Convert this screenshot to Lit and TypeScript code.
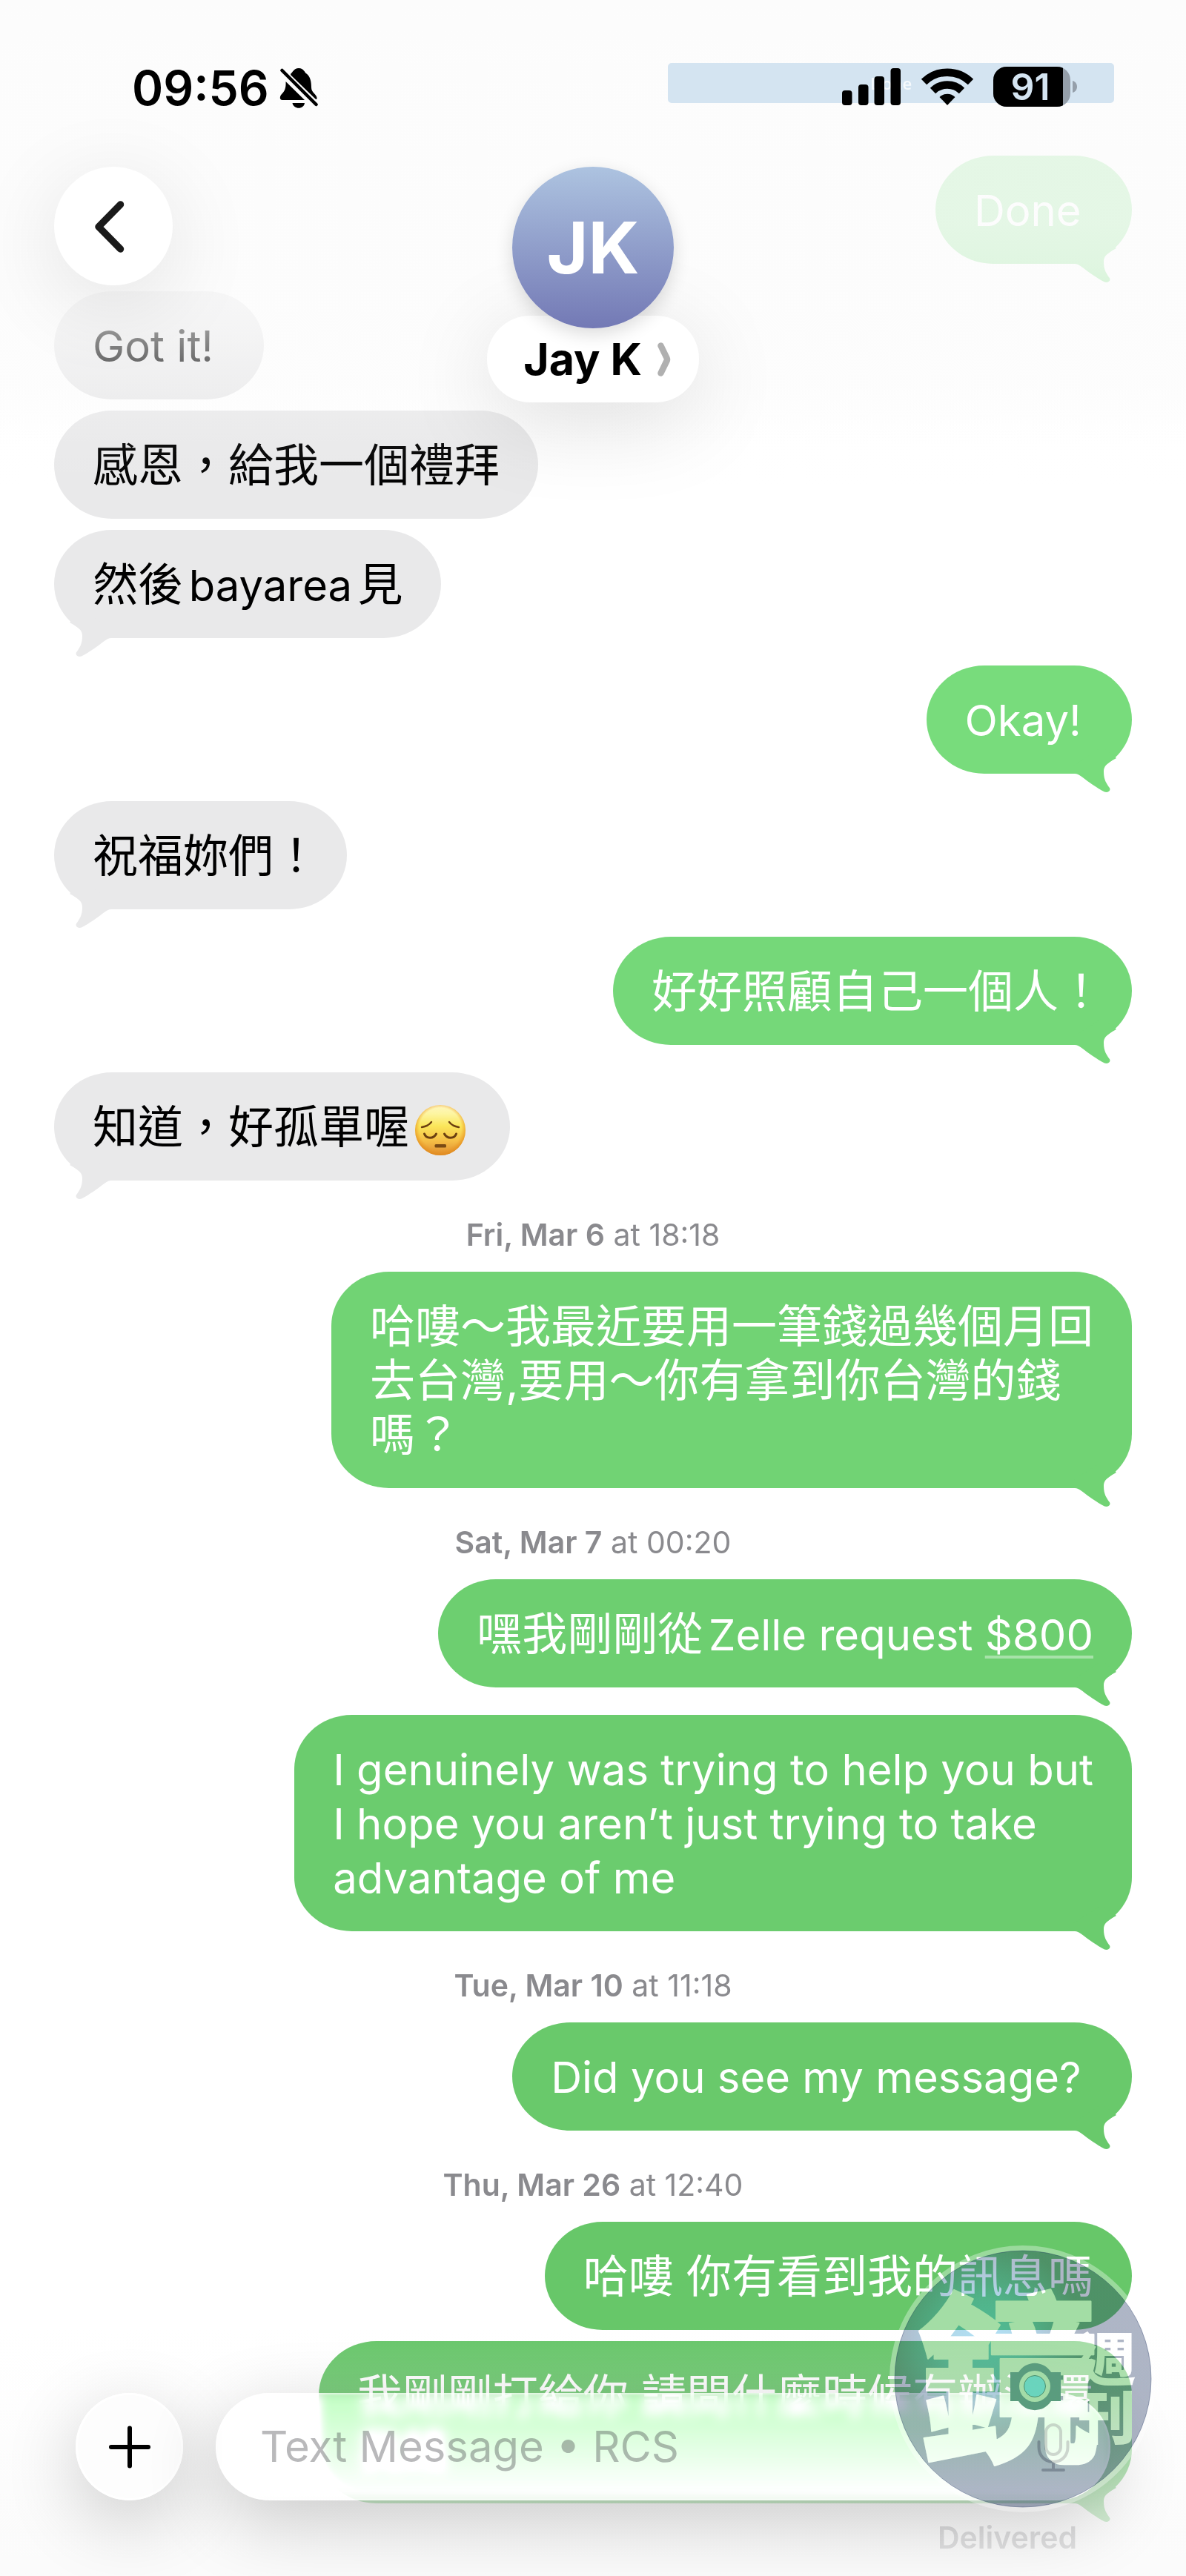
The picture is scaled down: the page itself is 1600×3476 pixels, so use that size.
import { LitElement, html, css, svg, nothing, type TemplateResult } from "lit";
import { customElement, property } from "lit/decorators.js";
import { classMap } from "lit/directives/class-map.js";
import { styleMap } from "lit/directives/style-map.js";

interface Message {
  kind: "message";
  from: "me" | "them";
  body: string | TemplateResult;
  tint?: string;
  tail?: boolean;
  latin?: boolean;
  snug?: boolean;
}

interface Stamp {
  kind: "stamp";
  day: string;
  time: string;
}

const pensive = html`<svg class="emoji" viewBox="0 0 68 68" role="img" aria-label="pensive face">
  <defs>
    <linearGradient id="face" x1="0" y1="0" x2="0" y2="1">
      <stop offset="0" stop-color="#fff6c0" />
      <stop offset=".18" stop-color="#fdf5a0" />
      <stop offset=".42" stop-color="#fbe65a" />
      <stop offset=".72" stop-color="#f5bd45" />
      <stop offset="1" stop-color="#dd8a30" />
    </linearGradient>
    <radialGradient id="rim" cx=".5" cy=".47" r=".53">
      <stop offset=".78" stop-color="#f09a20" stop-opacity="0" />
      <stop offset="1" stop-color="#e08a1c" stop-opacity=".85" />
    </radialGradient>
  </defs>
  <circle cx="34" cy="34" r="34" fill="url(#face)" />
  <circle cx="34" cy="34" r="34" fill="url(#rim)" />
  <g fill="none" stroke="#6b3f10" stroke-linecap="round">
    <path d="M9 30C15 29 19 27 22 23" stroke-width="2.4" />
    <path d="M59 30C53 29 49 27 46 23" stroke-width="2.4" />
    <path d="M12.500 39C15 46 25 46 28.500 39" stroke-width="3" />
    <path d="M39.500 39C43 46 53 46 55.500 39" stroke-width="3" />
  </g>
  <rect x="26.500" y="53" width="15.500" height="4.500" rx="1.500" fill="#7a4a14" />
</svg>`;

const them = (body: Message["body"], extra: Partial<Message> = {}): Message => ({
  kind: "message",
  from: "them",
  body,
  ...extra,
});
const me = (body: Message["body"], tint: string, extra: Partial<Message> = {}): Message => ({
  kind: "message",
  from: "me",
  body,
  tint,
  tail: true,
  ...extra,
});
const stamp = (day: string, time: string): Stamp => ({ kind: "stamp", day, time });

const thread: Array<Message | Stamp> = [
  me("Done ", "#7adf80", { latin: true }),
  them("Got it! ", { latin: true }),
  them("感恩，給我一個禮拜"),
  them(html`然後<span class="run">bayarea</span>見`, { tail: true }),
  me("Okay! ", "#78dc7c", { latin: true }),
  them("祝福妳們！", { tail: true, snug: true }),
  me("好好照顧自己一個人！", "#75d879", { snug: true }),
  them(html`知道，好孤單喔${pensive}`, { tail: true }),
  stamp("Fri, Mar 6", "18:18"),
  me("哈嘍～我最近要用一筆錢過幾個月回\n去台灣,要用～你有拿到你台灣的錢\n嗎？", "#71d374"),
  stamp("Sat, Mar 7", "00:20"),
  me(html`嘿我剛剛從<span class="run">Zelle request <a class="amount" href="#pay">$800</a></span>`, "#6dcf70"),
  me("I genuinely was trying to help you but\nI hope you aren’t just trying to take\nadvantage of me", "#6bcc6e", { latin: true }),
  stamp("Tue, Mar 10", "11:18"),
  me("Did you see my message? ", "#69c96b", { latin: true }),
  stamp("Thu, Mar 26", "12:40"),
  me("哈嘍 你有看到我的訊息嗎", "#67c769", { tail: false }),
  me("我剛剛打給你 請問什麼時候有辦法還\n我錢", "#67c669"),
];

@customElement("chat-bubble")
export class ChatBubble extends LitElement {
  @property({ attribute: false }) message!: Message;

  static styles = css`
    :host {
      display: flex;
    }
    .bubble {
      position: relative;
      box-sizing: border-box;
      padding: 38px 52px 35px;
      border-radius: 78px / 73px;
      background: var(--tint, #e9e9ea);
      color: #000;
      font-size: 61px;
      line-height: 73px;
      white-space: pre;
      text-autospace: normal;
    }
    .me {
      margin-left: auto;
      color: #fff;
    }
    .latin,
    .run {
      font-size: 58px;
    }
    .run {
      line-height: 1;
    }
    .snug {
      padding-right: 38px;
    }
    .tail {
      position: absolute;
      bottom: -26px;
      left: 0;
      width: 80px;
      height: 66px;
      fill: var(--tint, #e9e9ea);
      transform: scaleX(-1);
    }
    .me .tail {
      left: auto;
      right: 0;
      transform: none;
    }
    .emoji {
      width: 68px;
      height: 68px;
      margin: -4px 8px;
      vertical-align: -12px;
    }
    .amount {
      color: inherit;
      text-decoration: underline;
      text-decoration-color: rgba(255, 255, 255, 0.4);
      text-decoration-thickness: 4px;
      text-underline-offset: 7px;
    }
  `;

  render() {
    const { from, body, tint, tail, latin, snug } = this.message;
    const classes = classMap({ bubble: true, me: from === "me", latin: !!latin, snug: !!snug });
    const tailShape = html`<svg class="tail" viewBox="0 0 80 66" aria-hidden="true">
      <path d="M0 30V40H3C9 40 14 46 23 52C33 59 38 62 43 64.500C48 66.500 53 62 49 58C46 53 42 49 42 37C42 30 46 26 59 19L40 4Z" />
    </svg>`;
    return html`<div class=${classes} style=${styleMap(tint ? { "--tint": tint } : {})}>${tail ? tailShape : nothing}${body}</div>`;
  }
}

@customElement("status-bar")
export class StatusBar extends LitElement {
  static styles = css`
    :host {
      display: flex;
      justify-content: space-between;
      align-items: center;
      height: 64px;
      padding: 0 146px 0 178px;
    }
    .clock,
    .system {
      display: flex;
      align-items: center;
    }
    .clock {
      gap: 14px;
      padding-top: 4px;
      font-size: 64px;
      font-weight: 600;
      line-height: 64px;
    }
    .bell {
      width: 52px;
      height: 56px;
    }
    .system {
      position: relative;
      gap: 26px;
    }
    .pill {
      position: absolute;
      top: -4px;
      right: -49px;
      display: flex;
      align-items: center;
      justify-content: center;
      width: 602px;
      height: 54px;
      border-radius: 5px;
      background: #d4e4f1;
      color: #f6fafd;
      font: 600 22px/54px "Open Sans", sans-serif;
      white-space: nowrap;
    }
    .bars,
    .wifi,
    .battery {
      position: relative;
    }
    .bars {
      width: 80px;
      height: 52px;
    }
    .wifi {
      width: 72px;
      height: 52px;
    }
    .battery {
      width: 114px;
      height: 56px;
    }
    .level {
      font-size: 50px;
      font-weight: 600;
      fill: #d4e4f1;
    }
  `;

  render() {
    return html`
      <div class="clock">
        <time>09:56</time>
        <svg class="bell" viewBox="0 0 52 56" aria-label="Silent mode" role="img">
          <path d="M15.500 8C18 7 19 1 26 1S34 7 36 8C42 12 43 20 43 27C43 34 50 36 50.500 41C50.500 44 49 43 48 42L15 10Z" />
          <path d="M8.500 19L34 44H4C0 44 0 39 3 36C7 32 9 28 8.500 19Z" />
          <path d="M17.500 48H34C33 57 19 57 17.500 48Z" />
          <path d="M3.500 4L49.500 50" stroke="#000" stroke-width="4.500" stroke-linecap="round" />
        </svg>
      </div>
      <div class="system">
        <span class="pill">Done</span>
        <svg class="bars" viewBox="0 0 80 52" role="img" aria-label="Signal">
          <rect x="0" y="31" width="13.500" height="20" rx="4" />
          <rect x="22" y="23" width="13.500" height="28" rx="4" />
          <rect x="43.500" y="12" width="13.500" height="39" rx="4" />
          <rect x="65.500" y="1" width="13.500" height="50" rx="4" />
        </svg>
        <svg class="wifi" viewBox="0 0 72 52" role="img" aria-label="Wi-Fi">
          <g fill="none" stroke="#000" stroke-width="10.500">
            <path d="M4.500 19.500A45 45 0 0 1 67.500 19.500" />
            <path d="M16.500 31.500A28 28 0 0 1 55.500 31.500" />
          </g>
          <path d="M25.500 40A15 15 0 0 1 46.500 40L36 51Z" />
        </svg>
        <svg class="battery" viewBox="0 0 114 56" role="img" aria-label="Battery 91 percent">
          <defs>
            <clipPath id="cell"><rect x="0" y="1" width="104" height="54" rx="18" /></clipPath>
          </defs>
          <g clip-path="url(#cell)">
            <rect width="104" height="56" fill="#959faa" />
            <rect width="94" height="56" />
          </g>
          <path d="M107 20C115 22 115 34 107 36Z" fill="#959faa" />
          <text class="level" x="50" y="46" text-anchor="middle">91</text>
        </svg>
      </div>
    `;
  }
}

@customElement("app-root")
export class AppRoot extends LitElement {
  static styles = css`
    :host {
      display: block;
      font-family: Inter, "Noto Sans CJK TC", sans-serif;
      color: #000;
    }
    .screen {
      position: relative;
      overflow: hidden;
      min-height: 100vh;
      background: linear-gradient(#fcfcfc 0, #fdfdfd 520px, #fff 600px);
    }
    .thread {
      display: flex;
      flex-direction: column;
      margin: 0;
      padding: 210px 73px 20px;
      list-style: none;
    }
    .item {
      margin-top: 15px;
    }
    .item:first-child,
    .stamp + .item {
      margin-top: 0;
    }
    .tailed + .item {
      margin-top: 37px;
    }
    .thread .stamp {
      margin: 0;
      padding: 49px 0 26px;
      text-align: center;
    }
    .stamp,
    .receipt {
      color: #8a8a8e;
      font-size: 41px;
      line-height: 48px;
    }
    .day,
    .receipt {
      font-weight: 600;
    }
    .receipt {
      padding: 22px 74px 0 0;
      text-align: right;
    }
    .veil {
      position: absolute;
      left: 0;
      right: 0;
      pointer-events: none;
    }
    .veil-top {
      top: 0;
      height: 660px;
      background: linear-gradient(
        rgba(252, 252, 252, 0.82) 300px,
        rgba(252, 252, 252, 0.78) 360px,
        rgba(252, 252, 252, 0.6) 445px,
        rgba(252, 252, 252, 0.42) 490px,
        rgba(252, 252, 252, 0.2) 545px,
        rgba(252, 252, 252, 0.06) 600px,
        rgba(252, 252, 252, 0) 660px
      );
    }
    .veil-bottom {
      bottom: 0;
      height: 336px;
      background: linear-gradient(
        rgba(255, 255, 255, 0) 0,
        rgba(250, 250, 250, 0.14) 85px,
        rgba(250, 250, 250, 0.5) 190px,
        rgba(250, 250, 250, 0.7) 250px,
        rgba(250, 250, 250, 0.82) 336px
      );
    }
    .top {
      position: absolute;
      top: 0;
      left: 0;
      right: 0;
      padding-top: 85px;
    }
    .nav {
      display: grid;
      grid-template-columns: 1fr auto 1fr;
      align-items: start;
      padding: 76px 73px 0;
    }
    button {
      display: grid;
      place-items: center;
      padding: 0;
      border: 0;
      background: none;
      color: inherit;
      font: inherit;
    }
    .back {
      width: 160px;
      height: 160px;
      border-radius: 50%;
      background: #fff;
      box-shadow: 0 24px 120px rgba(0, 0, 0, 0.11);
    }
    .back svg {
      width: 60px;
      height: 80px;
    }
    .contact {
      display: flex;
      flex-direction: column;
      align-items: center;
    }
    .avatar {
      position: relative;
      display: grid;
      place-items: center;
      width: 218px;
      height: 218px;
      border-radius: 50%;
      background: linear-gradient(#adc3e0, #7379b5);
      box-shadow: 0 8px 24px rgba(0, 0, 0, 0.14);
      color: #fff;
      font-size: 96px;
      font-weight: 700;
      line-height: 218px;
    }
    .name {
      display: flex;
      align-items: center;
      gap: 20px;
      height: 117px;
      margin-top: -17px;
      padding: 0 37px 0 49px;
      border-radius: 58px;
      background: #fff;
      box-shadow: 0 24px 120px rgba(0, 0, 0, 0.13);
      box-sizing: border-box;
      font-size: 59px;
      font-weight: 700;
    }
    .name svg {
      width: 20px;
      height: 48px;
    }
    .composer {
      position: absolute;
      left: 0;
      right: 0;
      bottom: 0;
      display: flex;
      gap: 44px;
      padding: 0 102px 102px;
    }
    .plus {
      flex: none;
      width: 145px;
      height: 145px;
      border-radius: 50%;
      background: #fdfdfd;
      box-shadow: 0 28px 100px rgba(0, 0, 0, 0.2), inset 0 0 0 3px #fff;
    }
    .plus svg {
      width: 60px;
      height: 60px;
    }
    .field {
      display: flex;
      flex: 1;
      align-items: center;
      height: 145px;
      padding: 0 38px 0 60px;
      box-sizing: border-box;
      border-radius: 73px;
      background: rgba(255, 255, 255, 0.3);
      box-shadow: 0 28px 100px rgba(0, 0, 0, 0.2), inset 0 0 3px 2px rgba(255, 255, 255, 0.6);
      backdrop-filter: blur(8px) brightness(1.32);
    }
    .entry {
      flex: 1;
      min-width: 0;
      padding: 0;
      border: 0;
      outline: 0;
      background: none;
      font: 400 58px/73px Inter, "Noto Sans CJK TC", sans-serif;
    }
    .entry::placeholder {
      color: rgba(50, 50, 56, 0.34);
      opacity: 1;
    }
    .mic {
      width: 78px;
      height: 78px;
    }
    .mic svg {
      width: 48px;
      height: 68px;
    }
    .badge {
      position: absolute;
      right: 40px;
      bottom: 86px;
      width: 360px;
      height: 360px;
      pointer-events: none;
    }
    .seal {
      font-family: "Noto Sans CJK TC", sans-serif;
      font-weight: 900;
      stroke-linejoin: round;
    }
    .seal-main {
      font-size: 246px;
      stroke-width: 2px;
    }
    .seal-side {
      font-size: 78px;
      stroke-width: 0;
    }
  `;

  private renderEntry(entry: Message | Stamp) {
    if (entry.kind === "stamp") {
      return html`<li class="stamp"><span class="day">${entry.day}</span> at ${entry.time}</li>`;
    }
    return html`<li class=${classMap({ item: true, tailed: !!entry.tail })}>
      <chat-bubble .message=${entry}></chat-bubble>
    </li>`;
  }

  private renderBadge() {
    const letters = svg`
      <text class="seal-main" x="37" y="272">鏡</text>
      <text class="seal-side" x="254" y="183">週</text>
      <text class="seal-side" x="254" y="262">刊</text>`;
    return html`<svg class="badge" viewBox="0 0 360 360" role="img" aria-label="鏡週刊">
      <defs>
        <radialGradient id="glow" gradientUnits="userSpaceOnUse" cx="130" cy="125" r="130">
          <stop offset="0" stop-color="#2bace3" />
          <stop offset=".4" stop-color="#2b94c4" />
          <stop offset="1" stop-color="#243864" />
        </radialGradient>
        <mask id="cut" maskUnits="userSpaceOnUse" x="0" y="0" width="360" height="360">
          <rect width="360" height="360" fill="#fff" />
          <g class="seal" fill="#000" stroke="#000">${letters}</g>
        </mask>
      </defs>
      <circle cx="180" cy="180" r="176.500" fill="none" stroke="#fff" stroke-opacity=".34" stroke-width="7" />
      <circle cx="180" cy="180" r="173" fill="url(#glow)" fill-opacity=".37" mask="url(#cut)" />
      <circle cx="180" cy="180" r="173" fill="none" stroke="#243864" stroke-opacity=".4" />
      <g class="seal" fill="#fff" stroke="#fff" opacity=".4">${letters}</g>
      <path d="M163 171H174A26 26 0 0 1 218 171H231V210H218A26 26 0 0 1 174 210H163Z" fill="#5a9c7e" />
      <circle cx="196" cy="190" r="21" fill="#a4dca8" />
      <circle cx="196" cy="190" r="14.500" fill="#6ad4bd" stroke="#4b8f6d" />
    </svg>`;
  }

  render() {
    return html`
      <main class="screen">
        <ol class="thread">
          ${thread.map((entry) => this.renderEntry(entry))}
          <li class="receipt">Delivered</li>
        </ol>
        <div class="veil veil-top"></div>
        <div class="veil veil-bottom"></div>

        <header class="top">
          <status-bar></status-bar>
          <nav class="nav" aria-label="Conversation">
            <button class="back" type="button" aria-label="Back">
              <svg viewBox="0 0 60 80" fill="none" stroke="#1a1a1a" stroke-width="9.500" stroke-linecap="round" stroke-linejoin="round">
                <path d="M39.500 11L10 41L39.500 71" />
              </svg>
            </button>
            <button class="contact" type="button">
              <span class="avatar">JK</span>
              <span class="name">
                Jay K
                <svg viewBox="0 0 20 48" fill="none" stroke="#b0b0b0" stroke-width="8.500" stroke-linecap="round" stroke-linejoin="round" aria-hidden="true">
                  <path d="M5.500 5.500L13.500 22Q14.500 24 13.500 26L5.500 42.500" />
                </svg>
              </span>
            </button>
          </nav>
        </header>

        <form class="composer" @submit=${(event: Event) => event.preventDefault()}>
          <button class="plus" type="button" aria-label="Add attachment">
            <svg viewBox="0 0 60 60" stroke="#000" stroke-width="6" stroke-linecap="round">
              <path d="M30 4.500V55.500M5 30H55" />
            </svg>
          </button>
          <div class="field">
            <input class="entry" type="text" aria-label="Text message" placeholder="Text Message • RCS" />
            <button class="mic" type="button" aria-label="Dictate">
              <svg viewBox="0 0 48 68" fill="none" stroke="#3c3c43" stroke-opacity=".35" stroke-width="4" stroke-linecap="round">
                <rect x="14" y="4" width="20" height="40" rx="10" />
                <path d="M4.500 27V34C4.500 46 13 54 24 54S43.500 46 43.500 34V27M24 54V65M10 65H38" />
              </svg>
            </button>
          </div>
        </form>
        ${this.renderBadge()}
      </main>
    `;
  }
}
